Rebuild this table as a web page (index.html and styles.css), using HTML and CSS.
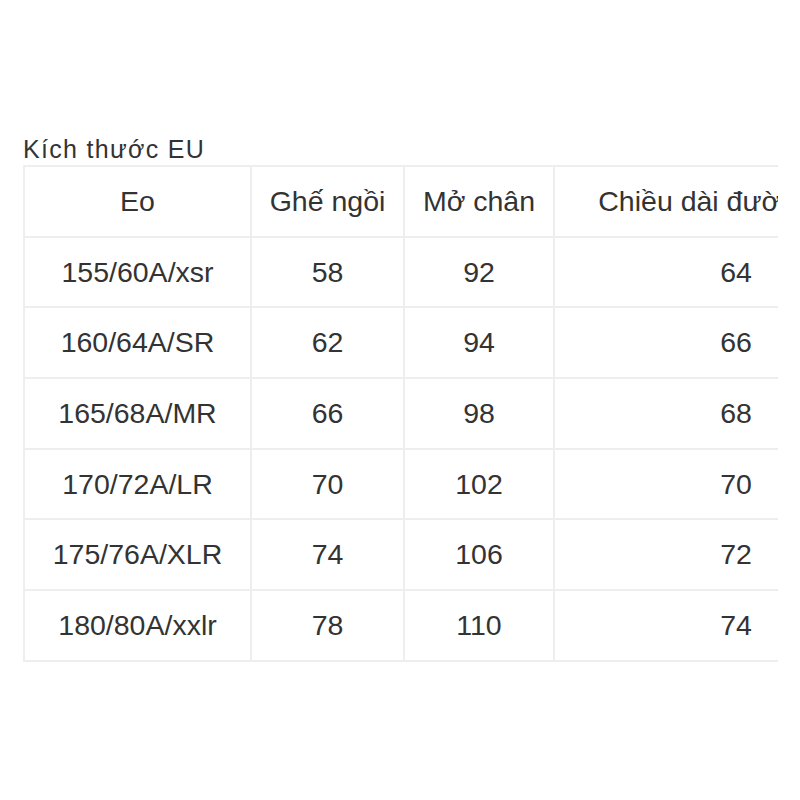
FILE: index.html
```html
<!DOCTYPE html>
<html lang="vi">
<head>
<meta charset="utf-8">
<link rel="stylesheet" href="styles.css">
</head>
<body>
<div class="page">
  <div class="title">Kích thước EU</div>
  <div class="clip">
    <table class="size-table">
      <colgroup>
        <col class="c1"><col class="c2"><col class="c3"><col class="c4">
      </colgroup>
      <tr><td>Eo</td><td>Ghế ngồi</td><td>Mở chân</td><td>Chiều dài đường may</td></tr>
      <tr><td>155/60A/xsr</td><td>58</td><td>92</td><td>64</td></tr>
      <tr><td>160/64A/SR</td><td>62</td><td>94</td><td>66</td></tr>
      <tr><td>165/68A/MR</td><td>66</td><td>98</td><td>68</td></tr>
      <tr><td>170/72A/LR</td><td>70</td><td>102</td><td>70</td></tr>
      <tr><td>175/76A/XLR</td><td>74</td><td>106</td><td>72</td></tr>
      <tr><td>180/80A/xxlr</td><td>78</td><td>110</td><td>74</td></tr>
    </table>
  </div>
</div>
</body>
</html>
```
FILE: styles.css
```css
html, body {
  margin: 0;
  padding: 0;
  background: #ffffff;
}
.page {
  padding: 134px 0 0 23px;
  font-family: "Liberation Sans", Arial, sans-serif;
  color: #333333;
}
.title {
  font-size: 25px;
  letter-spacing: 1.3px;
  line-height: 30px;
  height: 31px;
}
.clip {
  width: 755px;
  overflow: hidden;
}
.size-table {
  border-collapse: collapse;
  table-layout: fixed;
  width: 894px;
  font-size: 28.5px;
}
.c1 { width: 227px; }
.c2 { width: 153px; }
.c3 { width: 150px; }
.c4 { width: 364px; }
.size-table td {
  border: 2px solid #eeeeee;
  height: 68.7px;
  padding: 0;
  text-align: center;
  vertical-align: middle;
  white-space: nowrap;
}
```
